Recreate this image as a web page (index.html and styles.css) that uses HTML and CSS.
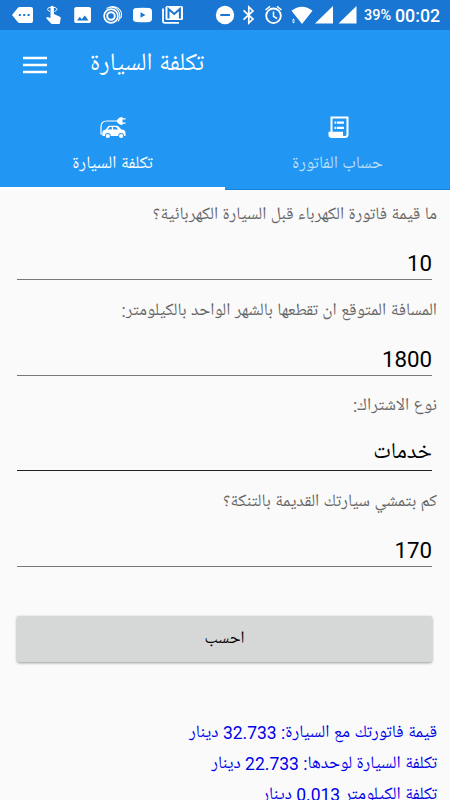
FILE: index.html
```
<!DOCTYPE html>
<html lang="ar">
<head>
<meta charset="utf-8">
<title>تكلفة السيارة</title>
<link rel="stylesheet" href="styles.css">
</head>
<body>
<div class="status">
  <svg class="notifications" width="216" height="30" viewBox="0 0 216 30">
    <path fill="#fff" fill-rule="evenodd" d="M12 15 17.500 8.200Q18.500 7 20 7H31Q33 7 33 9V21Q33 23 31 23H20Q18.500 23 17.500 21.800ZM18.800 14v2h2v-2ZM23.200 14v2h2v-2ZM27.600 14v2h2v-2Z"/>
    <path fill="#fff" d="M50.500 7.500a1.700 1.700 0 0 1 3.400 0V14l6 2.700Q61 17.400 60.700 18.500L59.700 24H51.500L46 18l1.200-1.100 3.300 1Z"/>
    <path fill="none" stroke="#fff" stroke-width="1" d="M50 11.500Q47.500 10.500 47.500 9.300C47.500 6.500 57 6.500 57 9.300Q57 10.500 54.500 11.500"/>
    <path fill="#fff" fill-rule="evenodd" d="M76.500 7h12.700Q91 7 91 8.800v12.400Q91 23 89.200 23H76Q74.200 23 74.200 21.200V8.800Q74.200 7 76.500 7ZM77 20.500h11.500l-3.700-5-3 3.800-2-2.500Z"/>
    <g fill="none" stroke="#fff"><circle cx="111" cy="16" r="6.900" stroke-width="1.700"/><circle cx="111" cy="16" r="3.800" stroke-width="2"/><path stroke-width="1.100" d="M106.500 8.500C112 5.600 118 8 119.500 13.500Q120.500 18 118 21.500M109.500 7C116 5 121.500 9.500 121.500 14.500Q121.500 17 120.500 18.500"/></g>
    <path fill="#fff" fill-rule="evenodd" d="M136 8q7-.6 13.500 0Q152 8.300 152 11v8q0 2.600-2.500 2.900-6.500.6-13.500 0-3-.3-3-2.900v-8q0-2.700 3-3ZM140.500 12.200v5.600l5-2.800Z"/>
    <rect x="165.500" y="6" width="17.500" height="14" rx="1.500" fill="#fff"/>
    <path fill="none" stroke="#1976d2" stroke-width="2" d="M168.500 18.500V9l5.700 5 5.700-5v9.500"/>
    <path fill="none" stroke="#fff" stroke-width="1.800" d="M163 8.500V21Q163 22.800 164.800 22.800H179"/>
  </svg>
  <svg class="system" width="146" height="30" viewBox="214 0 146 30">
    <circle cx="225" cy="15" r="9.200" fill="#fff"/><path stroke="#1976d2" stroke-width="2" d="M220.300 15h9.600"/>
    <path fill="none" stroke="#fff" stroke-width="1.700" d="M243.500 10.300 253 19 248.800 23V7L253 11 243.500 19.700"/>
    <g fill="none" stroke="#fff" stroke-width="1.800"><circle cx="273.500" cy="15.800" r="7.300"/><path stroke-width="1.500" d="M273.500 11.500v4.800l3.500 2.200M265.500 10l4.500-3.700M281.500 10 277 6.300"/></g>
    <path fill="#fff" d="M291.500 10.700Q302 2.700 312.500 10.700L302 24ZM315 23.500 333 6v17.500ZM338.500 23.500 356.500 6v17.500ZM292 20.500h3l-1.500-2ZM292 21.500h3l-1.500 2Z"/>
  </svg>
  <span class="battery">39%</span><span class="clock">00:02</span>
</div>
<header class="appbar">
  <svg width="24" height="18" viewBox="0 0 24 18"><path stroke="#fff" stroke-width="2.500" d="M0 2h24M0 9h24M0 16h24"/></svg>
  <h1 dir="rtl">تكلفة السيارة</h1>
</header>
<nav class="tabs">
  <div class="tab active">
    <svg width="28" height="24" viewBox="0 0 28 24">
      <path fill="none" stroke="#fff" stroke-width="1.200" d="M4 18H2V11Q2 5 8 5H18"/>
      <path fill="#fff" d="M17.500 5Q19.500 1 23.500 1v1.200h3v1.300h-3v3h3v1.300h-3V9Q19.500 9 17.500 5Z"/>
      <path fill="#fff" fill-rule="evenodd" d="M3.500 16Q3.500 14 6.500 13.800L9 10.500Q9.500 9.800 10.500 9.800h7q1.200 0 2 .8l3 3q4 .3 4 2.900v3.500h-1.500a2.900 2.900 0 0 0-5.800 0h-7.500a2.900 2.900 0 0 0-5.800 0H3.500ZM8.800 13.500h4V11h-2.200ZM14.200 11v2.500h5L17 11Z"/>
      <circle cx="8.800" cy="20" r="2.100" fill="#fff"/><circle cx="22.100" cy="20" r="2.100" fill="#fff"/>
    </svg>
    <span dir="rtl">تكلفة السيارة</span>
  </div>
  <div class="tab">
    <svg width="24" height="24" viewBox="0 0 24 24">
      <path fill="none" stroke="#fff" stroke-width="2" d="M5.500 17V1.500h16v17q0 2.600-2.500 2.600H6"/><path fill="#fff" d="M2.500 15.800h14.500v3.500q.2 1.500 2 1.500v1.300H5.800q-3.300 0-3.300-3.300ZM8.500 5.500h1.800v2.200H8.500Zm2.500 0h7v2.200h-7ZM8.500 10.700h1.800v2.200H8.500Zm2.500 0h7v2.200h-7Z"/>
    </svg>
    <span dir="rtl">حساب الفاتورة</span>
  </div>
</nav>
<main dir="rtl">
  <div class="field"><label>ما قيمة فاتورة الكهرباء قبل السيارة الكهربائية؟</label><div class="value">10</div></div>
  <div class="field"><label>المسافة المتوقع ان تقطعها بالشهر الواحد بالكيلومتر:</label><div class="value">1800</div></div>
  <div class="field"><label>نوع الاشتراك:</label><div class="value select">خدمات</div></div>
  <div class="field"><label>كم بتمشي سيارتك القديمة بالتنكة؟</label><div class="value">170</div></div>
  <button class="submit">احسب</button>
  <div class="results">
    <p>قيمة فاتورتك مع السيارة: 32.733 دينار</p>
    <p>تكلفة السيارة لوحدها: 22.733 دينار</p>
    <p>تكلفة الكيلومتر 0.013 دينار</p>
  </div>
</main>
</body>
</html>
```
FILE: styles.css
```
* { box-sizing: border-box; }
body {
  margin: 0;
  width: 450px;
  height: 800px;
  overflow: hidden;
  background: #fafafa;
  font-family: Roboto, "Noto Naskh Arabic UI", "Noto Naskh Arabic", "Noto Sans Arabic", "DejaVu Sans", sans-serif;
}
svg { display: block; flex: none; }
.status {
  display: flex;
  height: 30px;
  background: #1976d2;
  color: #fff;
  line-height: 30px;
}
.system { margin-left: -2px; }
.battery { margin-left: 4px; width: 31px; font-size: 14.5px; font-weight: 500; line-height: 32px; }
.clock { font-size: 17.8px; font-weight: 500; line-height: 31px; }
.appbar {
  display: flex;
  align-items: center;
  gap: 43px;
  height: 68px;
  padding-left: 23px;
  background: #2196f3;
  color: #fff;
}
.appbar svg { margin-top: 1px; }
h1 { margin: 2px 0 0; font-size: 24.8px; font-weight: 400; line-height: 30px; white-space: nowrap; }
.tabs { display: flex; height: 92px; background: #2196f3; }
.tab {
  width: 225px;
  display: flex;
  flex-direction: column;
  align-items: center;
  padding-top: 18px;
  border-bottom: 1px solid #1480df;
  color: #b8dffb;
  font-size: 17.5px;
}
.tab span { line-height: 24px; margin-top: 12px; white-space: nowrap; }
.tab.active { color: #fff; border-bottom: 3px solid #fff; }
main { padding: 0 13px 0 17px; }
.field { height: 95.6px; }
label { display: block; height: 48px; line-height: 50px; font-size: 17.45px; color: #666; white-space: nowrap; }
.value {
  height: 42px;
  margin-right: 5px;
  border-bottom: 1px solid #777;
  color: #000;
  font-size: 22.3px;
  line-height: 50px;
}
.select { border-color: #222; font-size: 22.7px; }
.submit {
  display: block;
  width: 415px;
  height: 46px;
  margin: 44px 5px 0 0;
  padding: 0 0 2px;
  border: 0;
  border-radius: 2px;
  background: #d6d7d7;
  box-shadow: 0 1px 3px rgba(0, 0, 0, .4);
  color: #000;
  font-family: inherit;
  font-size: 17px;
}
.results { margin-top: 55.5px; color: #0000e8; font-size: 17.5px; }
.results p { margin: 0; height: 31px; line-height: 31px; white-space: nowrap; }
```
